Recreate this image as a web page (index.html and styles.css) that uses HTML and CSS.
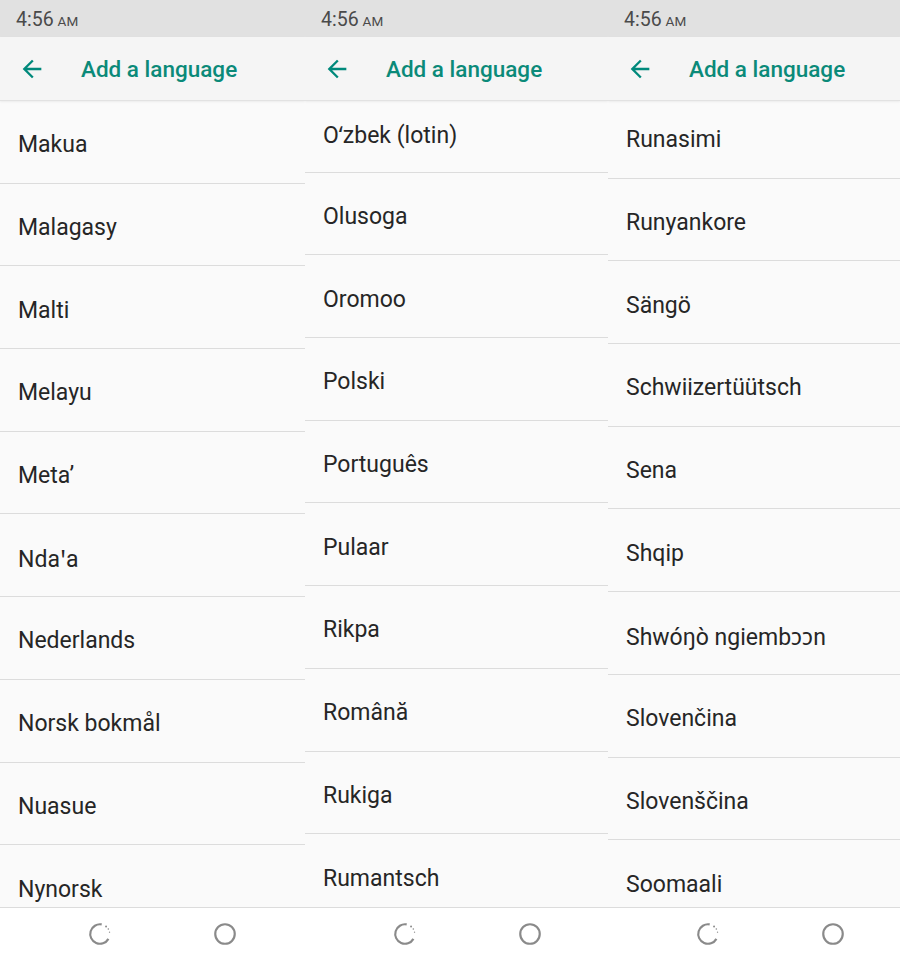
FILE: index.html
```html
<!DOCTYPE html>
<html lang="en">
<head>
    <meta charset="UTF-8">
    <meta name="viewport" content="width=device-width, initial-scale=1.0">
    <title>Add a language</title>
    <link rel="stylesheet" href="styles.css">
</head>
<body>
    <div class="screens">
        <!-- screen 1 -->
        <div class="screen">
            <div class="status-bar">4:56<span class="ampm">AM</span></div>
            <div class="toolbar">
                <svg class="back" viewBox="0 0 24 24"><path d="M20 11H7.83l5.59-5.59L12 4l-8 8 8 8 1.41-1.41L7.83 13H20v-2z"/></svg>
                <span class="title">Add a language</span>
            </div>
            <div class="list">
                <div class="list-inner">
                    <div class="row">Makua</div>
                    <div class="row">Malagasy</div>
                    <div class="row">Malti</div>
                    <div class="row">Melayu</div>
                    <div class="row">Metaʼ</div>
                    <div class="row">Ndaꞌa</div>
                    <div class="row">Nederlands</div>
                    <div class="row">Norsk bokmål</div>
                    <div class="row">Nuasue</div>
                    <div class="row">Nynorsk</div>
                </div>
            </div>
            <div class="nav-bar">
                <svg class="nav-icon" viewBox="0 0 24 24">
                    <path class="ring" d="M13.56 3.14 A9 9 0 1 0 19.79 16.5"/>
                    <circle class="dot" cx="17.6" cy="5" r="0.9"/>
                    <circle class="dot" cx="19.7" cy="7.4" r="0.75"/>
                    <circle class="dot" cx="20.8" cy="10.3" r="0.6"/>
                </svg>
                <svg class="nav-icon" viewBox="0 0 24 24"><circle class="ring" cx="12" cy="12" r="9"/></svg>
            </div>
        </div>

        <!-- screen 2 -->
        <div class="screen">
            <div class="status-bar">4:56<span class="ampm">AM</span></div>
            <div class="toolbar">
                <svg class="back" viewBox="0 0 24 24"><path d="M20 11H7.83l5.59-5.59L12 4l-8 8 8 8 1.41-1.41L7.83 13H20v-2z"/></svg>
                <span class="title">Add a language</span>
            </div>
            <div class="list">
                <div class="list-inner scrolled-a">
                    <div class="row">Oʻzbek (lotin)</div>
                    <div class="row">Olusoga</div>
                    <div class="row">Oromoo</div>
                    <div class="row">Polski</div>
                    <div class="row">Português</div>
                    <div class="row">Pulaar</div>
                    <div class="row">Rikpa</div>
                    <div class="row">Română</div>
                    <div class="row">Rukiga</div>
                    <div class="row">Rumantsch</div>
                </div>
            </div>
            <div class="nav-bar">
                <svg class="nav-icon" viewBox="0 0 24 24">
                    <path class="ring" d="M13.56 3.14 A9 9 0 1 0 19.79 16.5"/>
                    <circle class="dot" cx="17.6" cy="5" r="0.9"/>
                    <circle class="dot" cx="19.7" cy="7.4" r="0.75"/>
                    <circle class="dot" cx="20.8" cy="10.3" r="0.6"/>
                </svg>
                <svg class="nav-icon" viewBox="0 0 24 24"><circle class="ring" cx="12" cy="12" r="9"/></svg>
            </div>
        </div>

        <!-- screen 3 -->
        <div class="screen">
            <div class="status-bar">4:56<span class="ampm">AM</span></div>
            <div class="toolbar">
                <svg class="back" viewBox="0 0 24 24"><path d="M20 11H7.83l5.59-5.59L12 4l-8 8 8 8 1.41-1.41L7.83 13H20v-2z"/></svg>
                <span class="title">Add a language</span>
            </div>
            <div class="list">
                <div class="list-inner scrolled-b">
                    <div class="row">Runasimi</div>
                    <div class="row">Runyankore</div>
                    <div class="row">Sängö</div>
                    <div class="row">Schwiizertüütsch</div>
                    <div class="row">Sena</div>
                    <div class="row">Shqip</div>
                    <div class="row">Shwóŋò ngiembɔɔn</div>
                    <div class="row">Slovenčina</div>
                    <div class="row">Slovenščina</div>
                    <div class="row">Soomaali</div>
                </div>
            </div>
            <div class="nav-bar">
                <svg class="nav-icon" viewBox="0 0 24 24">
                    <path class="ring" d="M13.56 3.14 A9 9 0 1 0 19.79 16.5"/>
                    <circle class="dot" cx="17.6" cy="5" r="0.9"/>
                    <circle class="dot" cx="19.7" cy="7.4" r="0.75"/>
                    <circle class="dot" cx="20.8" cy="10.3" r="0.6"/>
                </svg>
                <svg class="nav-icon" viewBox="0 0 24 24"><circle class="ring" cx="12" cy="12" r="9"/></svg>
            </div>
        </div>
    </div>
</body>
</html>
```

FILE: styles.css
```css
body {
    margin: 0;
    font-family: Roboto, "Noto Sans", sans-serif;
    background-color: #fafafa;
}
.screens {
    display: grid;
    grid-template-columns: 305px 303px 1fr;
    height: 960px;
    overflow: hidden;
}
.screen {
    display: flex;
    flex-direction: column;
    height: 960px;
    overflow: hidden;
    background-color: #fafafa;
}
.status-bar {
    height: 37px;
    flex: none;
    background-color: #e1e1e1;
    color: #4a4a4a;
    font-size: 19.5px;
    line-height: 40px;
    padding-left: 16px;
    box-sizing: border-box;
}
.ampm {
    font-size: 13.5px;
    margin-left: 4px;
}
.toolbar {
    height: 64px;
    flex: none;
    display: flex;
    align-items: center;
    background-color: #f5f5f5;
    border-bottom: 1px solid #e2e2e2;
    box-shadow: 0 1px 2px rgba(0,0,0,0.06);
    box-sizing: border-box;
    position: relative;
    z-index: 1;
}
.back {
    fill: #00897b;
    margin-left: 18px;
    width: 28px;
    height: 28px;
}
.title {
    margin-left: 35px;
    color: #0b8a79;
    font-size: 22.5px;
    font-weight: 500;
}
.list {
    flex: 1;
    overflow: hidden;
    border-bottom: 1px solid #dcdcdc;
}
.list-inner.scrolled-a {
    margin-top: -11px;
}
.list-inner.scrolled-b {
    margin-top: -5px;
}
.row {
    height: 82.7px;
    box-sizing: border-box;
    display: flex;
    align-items: center;
    padding: 6px 0 0 18px;
    border-bottom: 1px solid #dcdcdc;
    font-size: 23px;
    color: #262626;
}
.nav-bar {
    height: 52px;
    flex: none;
    display: flex;
    align-items: center;
    background-color: #ffffff;
    padding-left: 87px;
    gap: 99px;
}
.nav-icon {
    width: 26px;
    height: 26px;
}
.nav-icon .ring {
    fill: none;
    stroke: #8a8a8a;
    stroke-width: 2;
}
.nav-icon .dot {
    fill: #8a8a8a;
}
```
